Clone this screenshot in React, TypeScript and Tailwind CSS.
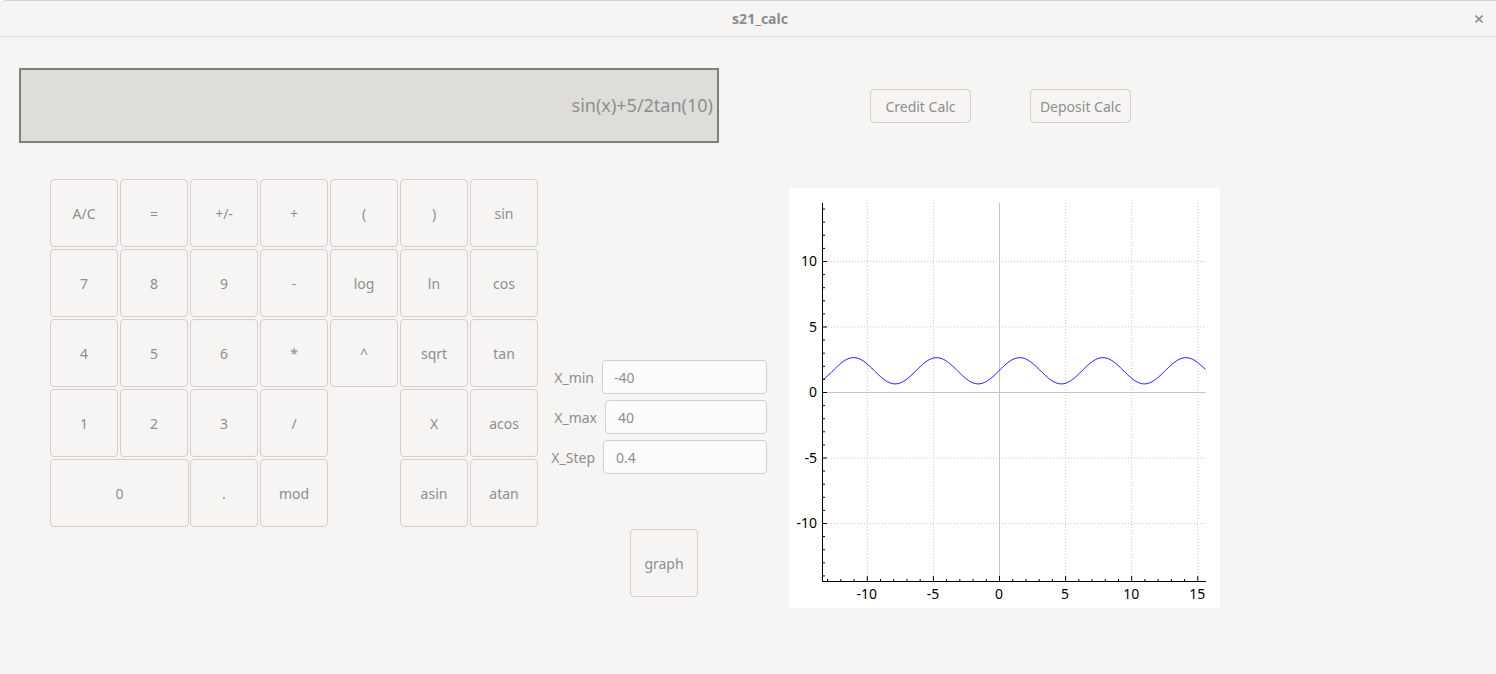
import React from "react";

const keys: { label: string; span?: boolean; empty?: boolean }[] = [
  { label: "A/C" }, { label: "=" }, { label: "+/-" }, { label: "+" }, { label: "(" }, { label: ")" }, { label: "sin" },
  { label: "7" }, { label: "8" }, { label: "9" }, { label: "-" }, { label: "log" }, { label: "ln" }, { label: "cos" },
  { label: "4" }, { label: "5" }, { label: "6" }, { label: "*" }, { label: "^" }, { label: "sqrt" }, { label: "tan" },
  { label: "1" }, { label: "2" }, { label: "3" }, { label: "/" }, { label: "", empty: true }, { label: "X" }, { label: "acos" },
  { label: "0", span: true }, { label: "." }, { label: "mod" }, { label: "", empty: true }, { label: "asin" }, { label: "atan" },
];

function Plot() {
  // plot area in px, relative to the white box
  const x0 = 210;
  const y0 = 204;
  const sx = 13.22;
  const sy = 13.1;
  const left = 33;
  const right = 417;
  const top = 15;
  const bottom = 393;
  const px = (v: number) => x0 + v * sx;
  const py = (v: number) => y0 - v * sy;

  const shift = 2.5 * Math.tan(10);
  const pts: string[] = [];
  for (let x = (left - x0) / sx; x <= (right - x0) / sx; x += 0.05) {
    pts.push(`${px(x).toFixed(2)},${py(Math.sin(x) + shift).toFixed(2)}`);
  }

  const xMajor = [-10, -5, 0, 5, 10, 15];
  const yMajor = [10, 5, 0, -5, -10];
  const xMinor: number[] = [];
  for (let i = -13; i <= 15; i++) xMinor.push(i);
  const yMinor: number[] = [];
  for (let i = -14; i <= 14; i++) yMinor.push(i);

  return (
    <div className="w-[431px] h-[420px] bg-white">
      <svg width="431" height="420" className="block" style={{ fontFamily: "'Noto Sans', sans-serif" }}>
        {/* grid */}
        {xMajor.filter((v) => v !== 0).map((v) => (
          <line key={"gx" + v} x1={px(v) + 0.5} x2={px(v) + 0.5} y1={top} y2={bottom} stroke="#c8c8c8" strokeDasharray="1 2" />
        ))}
        {yMajor.filter((v) => v !== 0).map((v) => (
          <line key={"gy" + v} x1={left} x2={right} y1={py(v) + 0.5} y2={py(v) + 0.5} stroke="#c8c8c8" strokeDasharray="1 2" />
        ))}
        <line x1={px(0) + 0.5} x2={px(0) + 0.5} y1={top} y2={bottom} stroke="#c4c4c4" />
        <line x1={left} x2={right} y1={py(0) + 0.5} y2={py(0) + 0.5} stroke="#c4c4c4" />

        {/* curve */}
        <polyline points={pts.join(" ")} fill="none" stroke="#0000ff" strokeWidth="1" />

        {/* axes */}
        <line x1={left + 0.5} x2={left + 0.5} y1={top} y2={bottom} stroke="#000" />
        <line x1={left} x2={right} y1={bottom + 0.5} y2={bottom + 0.5} stroke="#000" />
        {xMinor.map((v) => (
          <line key={"tx" + v} x1={px(v) + 0.5} x2={px(v) + 0.5} y1={bottom} y2={bottom - (v % 5 === 0 ? 5 : 2)} stroke="#000" />
        ))}
        {yMinor.map((v) => (
          <line key={"ty" + v} x1={left} x2={left + (v % 5 === 0 ? 5 : 3)} y1={py(v) + 0.5} y2={py(v) + 0.5} stroke="#000" />
        ))}
        {xMajor.map((v) => (
          <text key={"lx" + v} x={px(v)} y={411} fontSize="14" textAnchor="middle" fill="#000">
            {v}
          </text>
        ))}
        {yMajor.map((v) => (
          <text key={"ly" + v} x={28} y={py(v) + 5} fontSize="14" textAnchor="end" fill="#000">
            {v}
          </text>
        ))}
      </svg>
    </div>
  );
}

export default function App() {
  return (
    <div className="w-[1496px] h-[674px] bg-[#f6f5f4] font-['Noto_Sans',sans-serif] overflow-hidden border-t border-[#d0d0d0] rounded-tl-[6px]">
      {/* Title bar */}
      <div className="relative h-[36px] border-b border-[#dcdad7] flex items-center justify-center pl-[24px]">
        <span className="text-[14px] font-bold text-[#8c8c8c]">s21_calc</span>
        <svg className="absolute right-[13px] top-[14px]" width="8" height="8" viewBox="0 0 8 8">
          <path d="M0.5 0.5 L7.5 7.5 M7.5 0.5 L0.5 7.5" stroke="#8c8c8c" strokeWidth="1.6" />
        </svg>
      </div>

      <div className="pl-[19px] pt-[31px]">
        {/* Top row */}
        <div className="flex items-start">
          <div className="w-[700px] h-[75px] border-2 border-[#7f7f7d] bg-[#deddda] flex items-center justify-end pr-[4px]">
            <span className="text-[18px] text-[#8e8e8e]">sin(x)+5/2tan(10)</span>
          </div>
          <button className="ml-[151px] mt-[21px] w-[101px] h-[34px] border border-[#d3cec9] rounded-[4px] text-[14px] text-[#8e8e8e]">
            Credit Calc
          </button>
          <button className="ml-[59px] mt-[21px] w-[101px] h-[34px] border border-[#d3cec9] rounded-[4px] text-[14px] text-[#8e8e8e]">
            Deposit Calc
          </button>
        </div>

        {/* Bottom row */}
        <div className="flex items-start mt-[36px]">
          <div className="ml-[31px] grid grid-cols-[repeat(7,68px)] auto-rows-[68px] gap-[2px]">
            {keys.map((k, i) =>
              k.empty ? (
                <div key={i} />
              ) : (
                <button
                  key={i}
                  className={
                    "border border-[#d3cec9] rounded-[4px] text-[14px] text-[#8e8e8e] bg-[#f6f5f4] " +
                    (k.span ? "col-span-2 w-[139px]" : "")
                  }
                >
                  {k.label}
                </button>
              )
            )}
          </div>

          <div className="ml-[10px] w-[219px] pt-[181px] flex flex-col">
            <div className="flex items-center justify-end h-[34px]">
              <span className="text-[14px] text-[#8e8e8e] mr-[8px]">X_min</span>
              <div className="w-[165px] h-[34px] border border-[#d3cec9] rounded-[4px] bg-[#fcfcfc] flex items-center pl-[11px] text-[14px] text-[#8e8e8e]">
                -40
              </div>
            </div>
            <div className="flex items-center justify-end h-[34px] mt-[6px]">
              <span className="text-[14px] text-[#8e8e8e] mr-[8px]">X_max</span>
              <div className="w-[162px] h-[34px] border border-[#d3cec9] rounded-[4px] bg-[#fcfcfc] flex items-center pl-[12px] text-[14px] text-[#8e8e8e]">
                40
              </div>
            </div>
            <div className="flex items-center justify-end h-[34px] mt-[6px]">
              <span className="text-[14px] text-[#8e8e8e] mr-[8px]">X_Step</span>
              <div className="w-[164px] h-[34px] border border-[#d3cec9] rounded-[4px] bg-[#fcfcfc] flex items-center pl-[12px] text-[14px] text-[#8e8e8e]">
                0.4
              </div>
            </div>
            <button className="ml-[82px] mt-[55px] w-[68px] h-[68px] border border-[#d3cec9] rounded-[4px] text-[14px] text-[#8e8e8e]">
              graph
            </button>
          </div>

          <div className="ml-[22px] mt-[9px]">
            <Plot />
          </div>
        </div>
      </div>
    </div>
  );
}
